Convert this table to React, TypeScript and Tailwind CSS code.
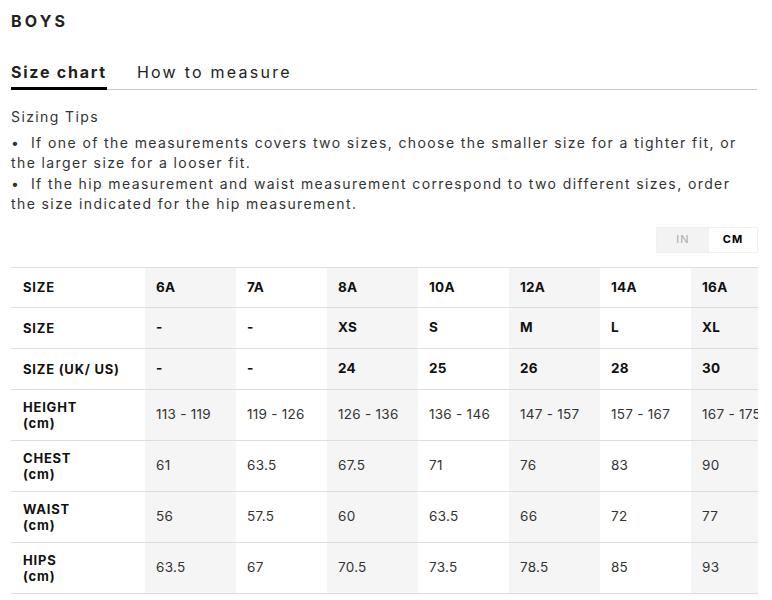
import { useState } from "react"

const columns = ["6A", "7A", "8A", "10A", "12A", "14A", "16A"]

const rows: { label: string; unit?: string; values: string[]; bold?: boolean }[] = [
    { label: "SIZE", values: columns, bold: true },
    { label: "SIZE", values: ["-", "-", "XS", "S", "M", "L", "XL"], bold: true },
    { label: "SIZE (UK/ US)", values: ["-", "-", "24", "25", "26", "28", "30"], bold: true },
    { label: "HEIGHT", unit: "(cm)", values: ["113 - 119", "119 - 126", "126 - 136", "136 - 146", "147 - 157", "157 - 167", "167 - 175"] },
    { label: "CHEST", unit: "(cm)", values: ["61", "63.5", "67.5", "71", "76", "83", "90"] },
    { label: "WAIST", unit: "(cm)", values: ["56", "57.5", "60", "63.5", "66", "72", "77"] },
    { label: "HIPS", unit: "(cm)", values: ["63.5", "67", "70.5", "73.5", "78.5", "85", "93"] },
]

export default function App() {
    const [unit, setUnit] = useState<"in" | "cm">("cm")
    const [tab, setTab] = useState<"chart" | "measure">("chart")

    return (
        <div className="w-[772px] h-[600px] overflow-hidden bg-white text-[#222] font-['Inter','Liberation_Sans',sans-serif]">
            {/* Title */}
            <div className="pl-[11px] pt-[11px] text-[16px] font-bold tracking-[0.2em] leading-[20px]">BOYS</div>

            {/* Tabs */}
            <div className="mt-[30px] ml-[11px] mr-[15px] flex items-end border-b border-[#c8c8c8]">
                <button
                    onClick={() => setTab("chart")}
                    className={`pb-[4px] text-[16px] leading-[22px] -mb-px border-b-[3px] ${tab === "chart" ? "font-bold border-black tracking-[0.11em]" : "border-transparent tracking-[0.11em]"}`}
                >
                    Size chart
                </button>
                <button
                    onClick={() => setTab("measure")}
                    className={`ml-[30px] pb-[4px] text-[16px] leading-[22px] tracking-[0.14em] -mb-px border-b-[3px] ${tab === "measure" ? "font-bold border-black" : "border-transparent"}`}
                >
                    How to measure
                </button>
            </div>

            {/* Sizing tips */}
            <div className="pl-[11px] pr-[20px] pt-[17px] text-[14px] leading-[20.5px] tracking-[0.1em] text-[#333]">
                <p>Sizing Tips</p>
                <p className="mt-[5px]">• &nbsp;If one of the measurements covers two sizes, choose the smaller size for a tighter fit, or the larger size for a looser fit.</p>
                <p>• &nbsp;If the hip measurement and waist measurement correspond to two different sizes, order the size indicated for the hip measurement.</p>
            </div>

            {/* Unit toggle */}
            <div className="mt-[12px] flex justify-end pr-[14px]">
                <div className="flex h-[26px] border border-[#f0f0f0] text-[11px] tracking-[0.1em]">
                    <button
                        onClick={() => setUnit("in")}
                        className={`w-[52px] ${unit === "in" ? "bg-white font-bold text-black" : "bg-[#f3f3f3] text-[#aaa]"}`}
                    >
                        IN
                    </button>
                    <button
                        onClick={() => setUnit("cm")}
                        className={`w-[48px] ${unit === "cm" ? "bg-white font-bold text-black" : "bg-[#f3f3f3] text-[#aaa]"}`}
                    >
                        CM
                    </button>
                </div>
            </div>

            {/* Size table */}
            <div className="mt-[14px] ml-[11px] w-[747px] overflow-hidden">
                <table className="table-fixed border-collapse w-[771px]">
                    <colgroup>
                        <col className="w-[134px]" />
                        {columns.map((c) => (
                            <col key={c} className="w-[91px]" />
                        ))}
                    </colgroup>
                    <tbody>
                        {rows.map((row, i) => (
                            <tr key={i} className={`border-t border-[#dedede] ${row.unit ? "h-[51px]" : i === 0 ? "h-[40px]" : "h-[41px]"} ${i === rows.length - 1 ? "border-b" : ""}`}>
                                <td className="pl-[12px] text-[13px] font-bold tracking-[0.06em] leading-[16px] text-[#111] whitespace-nowrap">
                                    {row.label}
                                    {row.unit && <div>(cm)</div>}
                                </td>
                                {row.values.map((v, j) => (
                                    <td
                                        key={j}
                                        className={`pl-[11px] whitespace-nowrap text-[13.5px] tracking-[0.02em] ${j % 2 === 0 ? "bg-[#f5f5f5]" : ""} ${row.bold ? "font-bold text-[#111]" : "text-[#333]"}`}
                                    >
                                        {v}
                                    </td>
                                ))}
                            </tr>
                        ))}
                    </tbody>
                </table>
            </div>
        </div>
    )
}
